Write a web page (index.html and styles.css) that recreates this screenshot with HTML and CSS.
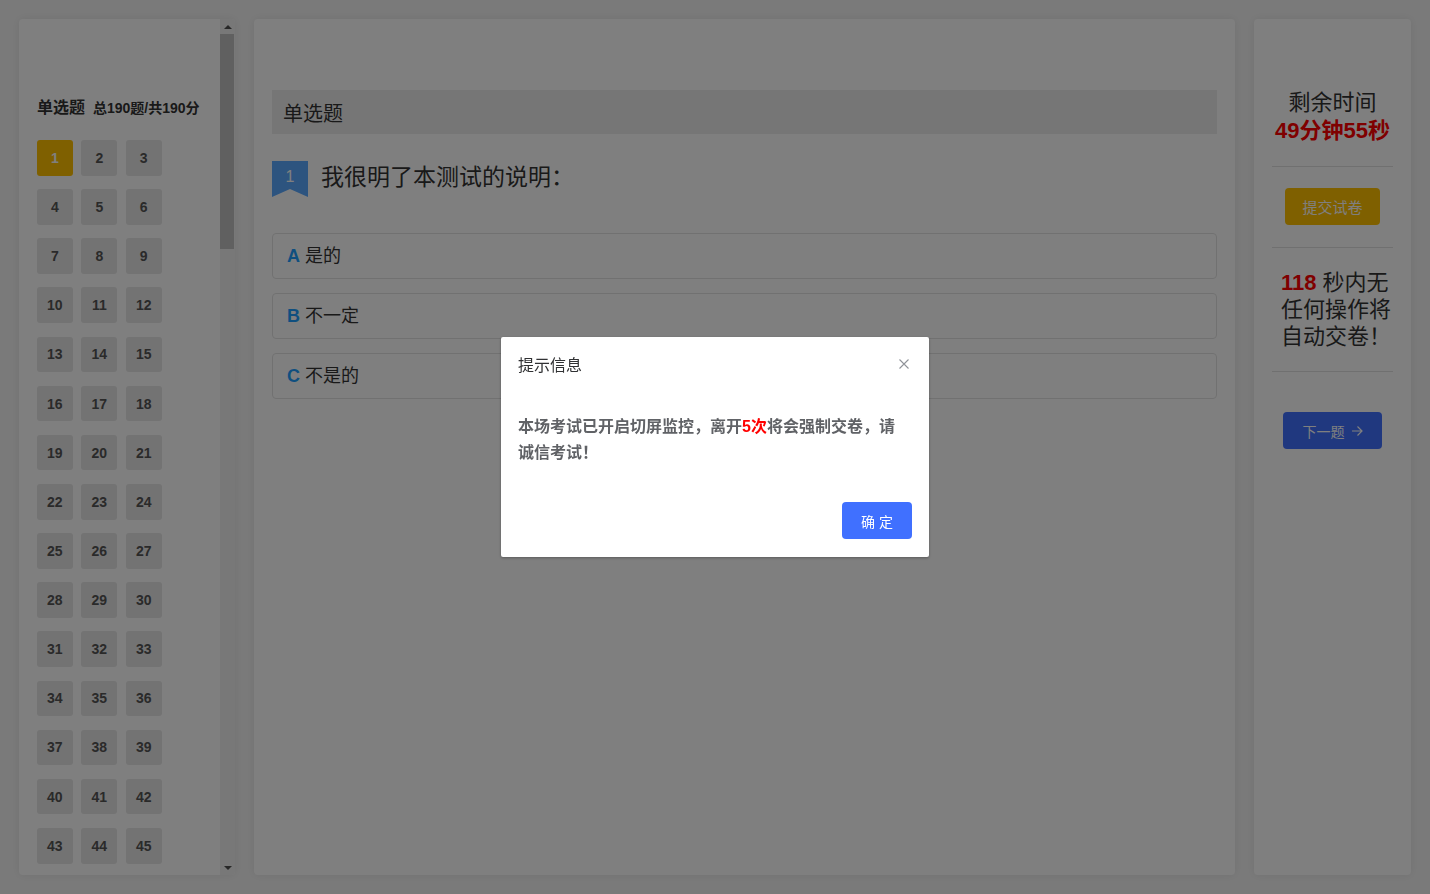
FILE: index.html
```html
<!DOCTYPE html>
<html lang="zh-CN">
<head>
<meta charset="utf-8">
<title>考试</title>
<link rel="stylesheet" href="styles.css">
</head>
<body>
<div class="page">
  <aside class="card nav">
    <div class="nav-body">
      <div class="nav-head"><span class="nav-type">单选题</span><span class="nav-total">总190题/共190分</span></div>
      <div class="nav-grid">
        <span class="qn active">1</span><span class="qn">2</span><span class="qn">3</span>
        <span class="qn">4</span><span class="qn">5</span><span class="qn">6</span>
        <span class="qn">7</span><span class="qn">8</span><span class="qn">9</span>
        <span class="qn">10</span><span class="qn">11</span><span class="qn">12</span>
        <span class="qn">13</span><span class="qn">14</span><span class="qn">15</span>
        <span class="qn">16</span><span class="qn">17</span><span class="qn">18</span>
        <span class="qn">19</span><span class="qn">20</span><span class="qn">21</span>
        <span class="qn">22</span><span class="qn">23</span><span class="qn">24</span>
        <span class="qn">25</span><span class="qn">26</span><span class="qn">27</span>
        <span class="qn">28</span><span class="qn">29</span><span class="qn">30</span>
        <span class="qn">31</span><span class="qn">32</span><span class="qn">33</span>
        <span class="qn">34</span><span class="qn">35</span><span class="qn">36</span>
        <span class="qn">37</span><span class="qn">38</span><span class="qn">39</span>
        <span class="qn">40</span><span class="qn">41</span><span class="qn">42</span>
        <span class="qn">43</span><span class="qn">44</span><span class="qn">45</span>
      </div>
    </div>
    <div class="scrollbar">
      <div class="sb-btn"><span class="tri-up"></span></div>
      <div class="sb-track"><div class="sb-thumb"></div></div>
      <div class="sb-btn"><span class="tri-down"></span></div>
    </div>
  </aside>

  <main class="card paper">
    <div class="q-type">单选题</div>
    <div class="q-row">
      <span class="q-badge">1</span>
      <span class="q-text">我很明了本测试的说明：</span>
    </div>
    <div class="options">
      <div class="option"><b class="opt-key">A</b>是的</div>
      <div class="option"><b class="opt-key">B</b>不一定</div>
      <div class="option"><b class="opt-key">C</b>不是的</div>
    </div>
  </main>

  <aside class="card side">
    <div class="time-label">剩余时间</div>
    <div class="time-value">49分钟55秒</div>
    <div class="divider"></div>
    <button class="btn btn-submit">提交试卷</button>
    <div class="divider div-2"></div>
    <div class="tip"><b class="tip-num">118</b> 秒内无任何操作将自动交卷！</div>
    <div class="divider"></div>
    <button class="btn btn-next">下一题<svg class="arrow" width="12" height="12" viewBox="0 0 12 12"><path d="M1 6h10M6.5 1.5 11 6l-4.5 4.5" fill="none" stroke="currentColor" stroke-width="1.2"/></svg></button>
  </aside>
</div>

<div class="mask">
  <div class="dialog">
    <div class="dialog-header">
      <span class="dialog-title">提示信息</span>
      <svg class="dialog-close" width="10" height="10" viewBox="0 0 10 10"><path d="M0.5 0.5 9.5 9.5M9.5 0.5 0.5 9.5" stroke="#909399" stroke-width="1.1"/></svg>
    </div>
    <div class="dialog-body">本场考试已开启切屏监控，离开<span class="warn">5次</span>将会强制交卷，请诚信考试！</div>
    <div class="dialog-footer"><button class="btn btn-ok">确 定</button></div>
  </div>
</div>
</body>
</html>
```

FILE: styles.css
```css
html, body {
  margin: 0;
  padding: 0;
  height: 100%;
}
body {
  background: #f5f5f5;
  font-family: "Liberation Sans", "Noto Sans CJK SC", sans-serif;
  color: #333;
  overflow: hidden;
}
.page {
  height: 100vh;
  box-sizing: border-box;
  padding: 19px;
  display: flex;
  gap: 19px;
}
.card {
  background: #fff;
  border-radius: 4px;
  box-shadow: 0 0 10px rgba(0, 0, 0, 0.08);
}

/* left navigation */
.nav {
  width: 216px;
  flex: none;
  display: flex;
  overflow: hidden;
}
.nav-body {
  flex: 1;
  padding: 78px 0 0 18px;
  overflow: hidden;
}
.nav-head {
  display: flex;
  align-items: baseline;
  height: 22px;
  line-height: 22px;
  font-weight: bold;
  color: #333;
}
.nav-type { font-size: 16px; }
.nav-total { font-size: 14px; margin-left: 8px; }
.nav-grid {
  margin-top: 21px;
  display: grid;
  grid-template-columns: repeat(3, 35.6px);
  column-gap: 8.9px;
  row-gap: 13.55px;
}
.qn {
  height: 35.6px;
  border-radius: 3px;
  background: #e6e6e6;
  color: #555;
  font-size: 14px;
  font-weight: bold;
  display: flex;
  align-items: center;
  justify-content: center;
}
.qn.active {
  background: #ffc000;
  color: #fff;
}
.scrollbar {
  width: 15px;
  flex: none;
  background: #f1f1f1;
  display: flex;
  flex-direction: column;
}
.sb-btn {
  height: 15px;
  display: flex;
  align-items: center;
  justify-content: center;
}
.tri-up {
  width: 0;
  height: 0;
  border-left: 4px solid transparent;
  border-right: 4px solid transparent;
  border-bottom: 4px solid #505050;
}
.tri-down {
  width: 0;
  height: 0;
  border-left: 4px solid transparent;
  border-right: 4px solid transparent;
  border-top: 4px solid #505050;
}
.sb-track { flex: 1; }
.sb-thumb {
  height: 215px;
  margin-right: 1px;
  background: #c1c1c1;
}

/* main paper */
.paper {
  flex: 1;
  padding: 71px 18px 0;
}
.q-type {
  height: 44px;
  background: #ececec;
  padding-left: 11px;
  display: flex;
  align-items: center;
  font-size: 20px;
  color: #333;
}
.q-row {
  margin-top: 27px;
  display: flex;
  align-items: flex-start;
  gap: 13px;
}
.q-badge {
  width: 36px;
  height: 36px;
  flex: none;
  background: #5aa8ff;
  color: #fff;
  font-size: 16px;
  line-height: 32px;
  text-align: center;
  clip-path: polygon(0 0, 100% 0, 100% 100%, 50% 78%, 0 100%);
}
.q-text {
  font-size: 23px;
  line-height: 32px;
  color: #333;
}
.options {
  margin-top: 36px;
  display: flex;
  flex-direction: column;
  gap: 14px;
}
.option {
  height: 46px;
  box-sizing: border-box;
  border: 1px solid #e2e2e2;
  border-radius: 4px;
  padding-left: 14px;
  display: flex;
  align-items: center;
  font-size: 18px;
  line-height: 22px;
  color: #333;
}
.opt-key {
  color: #1e9fff;
  margin-right: 5px;
}

/* right side */
.side {
  width: 157px;
  flex: none;
  box-sizing: border-box;
  padding-top: 70px;
  display: flex;
  flex-direction: column;
  align-items: center;
}
.time-label {
  font-size: 22px;
  line-height: 28px;
  color: #333;
}
.time-value {
  font-size: 22px;
  line-height: 28px;
  font-weight: bold;
  color: #ff0000;
}
.divider {
  align-self: stretch;
  margin: 21px 18px 0;
  height: 1px;
  background: #e0e0e0;
}
.div-2 { margin-top: 22px; }
.btn {
  border: none;
  border-radius: 4px;
  color: #fff;
  font-family: inherit;
  padding: 0;
  display: flex;
  align-items: center;
  justify-content: center;
}
.btn-submit {
  margin-top: 21px;
  width: 95px;
  height: 37px;
  background: #ffc000;
  font-size: 15px;
}
.tip {
  margin-top: 21px;
  align-self: flex-start;
  margin-left: 27px;
  width: 111px;
  font-size: 22px;
  line-height: 27px;
  color: #333;
}
.tip-num { color: #ff0000; }
.btn-next {
  margin-top: 40px;
  width: 99px;
  height: 37px;
  background: #4070ff;
  font-size: 14px;
}
.arrow { margin-left: 6px; }

/* dialog */
.mask {
  position: fixed;
  inset: 0;
  background: rgba(0, 0, 0, 0.5);
  display: flex;
  align-items: center;
  justify-content: center;
}
.dialog {
  width: 428px;
  background: #fff;
  border-radius: 2px;
  box-shadow: 0 1px 3px rgba(0, 0, 0, 0.3);
}
.dialog-header {
  display: flex;
  justify-content: space-between;
  align-items: center;
  padding: 18px 20px 0 17px;
}
.dialog-title {
  font-size: 16px;
  line-height: 22px;
  color: #303133;
}
.dialog-close { margin-top: -4px; }
.dialog-body {
  margin-top: 37px;
  padding: 0 20px 0 17px;
  font-size: 16px;
  line-height: 26px;
  font-weight: bold;
  color: #606266;
}
.warn { color: #ff0000; }
.dialog-footer {
  display: flex;
  justify-content: flex-end;
  padding: 36px 17px 18px;
}
.btn-ok {
  width: 70px;
  height: 37px;
  background: #4070ff;
  font-size: 14px;
}
```
